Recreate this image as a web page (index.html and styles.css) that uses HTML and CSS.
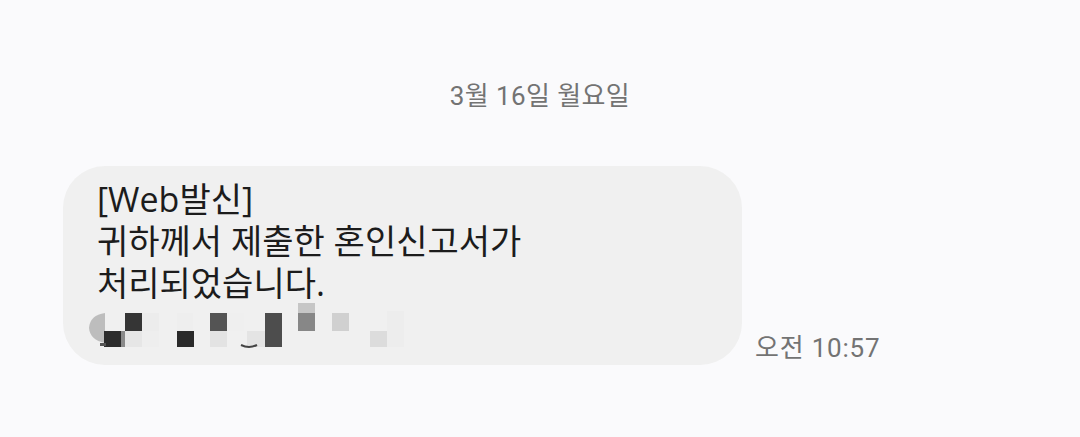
FILE: index.html
```html
<!DOCTYPE html>
<html lang="ko">
<head>
<meta charset="utf-8">
<link rel="stylesheet" href="styles.css">
</head>
<body>
<div class="chat">
  <div class="date">3월 16일 월요일</div>
  <div class="row">
    <div class="bubble">
      <div class="text">[Web발신]<br>귀하께서 제출한 혼인신고서가<br>처리되었습니다.</div>
      <svg class="mosaic" width="320" height="50" viewBox="0 0 320 50">
        <g transform="translate(-87,-303)">
          <path d="M105 313 L105 343 Q90 340 89 328 Q90 315 105 313 Z" fill="#bdbdbd"/>
          <rect x="125" y="313" width="17" height="18" fill="#353535"/>
          <rect x="142" y="313" width="17" height="18" fill="#ececec"/>
          <rect x="104" y="331" width="17" height="16" fill="#2c2c2c"/>
          <rect x="121" y="331" width="4" height="16" fill="#8a8a8a"/>
          <rect x="125" y="331" width="17" height="16" fill="#e6e6e6"/>
          <rect x="142" y="331" width="17" height="16" fill="#eeeeee"/>
          <rect x="100" y="343" width="6" height="3" fill="#555"/>
          <rect x="177" y="313" width="17" height="18" fill="#eeeeee"/>
          <rect x="177" y="331" width="17" height="16" fill="#2a2a2a"/>
          <rect x="193" y="313" width="17" height="18" fill="#f0f0f0"/>
          <rect x="210" y="313" width="17" height="18" fill="#545454"/>
          <rect x="210" y="331" width="17" height="16" fill="#e3e3e3"/>
          <rect x="227" y="313" width="17" height="18" fill="#efefef"/>
          <rect x="247" y="331" width="18" height="16" fill="#e4e4e4"/>
          <path d="M241 345 Q249 349 257 345" stroke="#444" stroke-width="2" fill="none"/>
          <rect x="265" y="313" width="17" height="34" fill="#4d4d4d"/>
          <rect x="298" y="303" width="17" height="10" fill="#c6c6c6"/>
          <rect x="298" y="313" width="17" height="18" fill="#878787"/>
          <rect x="332" y="313" width="17" height="18" fill="#d0d0d0"/>
          <rect x="370" y="331" width="17" height="16" fill="#dcdcdc"/>
          <rect x="387" y="311" width="17" height="36" fill="#ededed"/>
        </g>
      </svg>
    </div>
    <div class="time">오전 10:57</div>
  </div>
</div>
</body>
</html>
```

FILE: styles.css
```css
html, body {
  margin: 0;
  padding: 0;
  background: #fafafc;
}
body {
  font-family: "Roboto", "Noto Sans CJK KR", sans-serif;
  width: 1080px;
  height: 437px;
  overflow: hidden;
}
.chat {
  display: flex;
  flex-direction: column;
}
.date {
  margin-top: 79px;
  text-align: center;
  font-size: 26px;
  line-height: 34px;
  color: #737373;
  letter-spacing: 0.4px;
}
.row {
  margin-top: 53px;
  padding-left: 63px;
  display: flex;
  align-items: flex-end;
  gap: 13px;
}
.bubble {
  width: 679px;
  height: 199px;
  box-sizing: border-box;
  background: #f0f0f0;
  border-radius: 42px;
  padding: 12px 34px 0 34px;
}
.text {
  font-family: "Open Sans", "Noto Sans CJK KR", sans-serif;
  font-size: 34px;
  line-height: 42px;
  color: #1c1c1c;
}
.mosaic {
  display: block;
  margin-top: -1px;
  margin-left: -10px;
}
.time {
  font-size: 26px;
  line-height: 34px;
  color: #737373;
  letter-spacing: 0.8px;
}
```
